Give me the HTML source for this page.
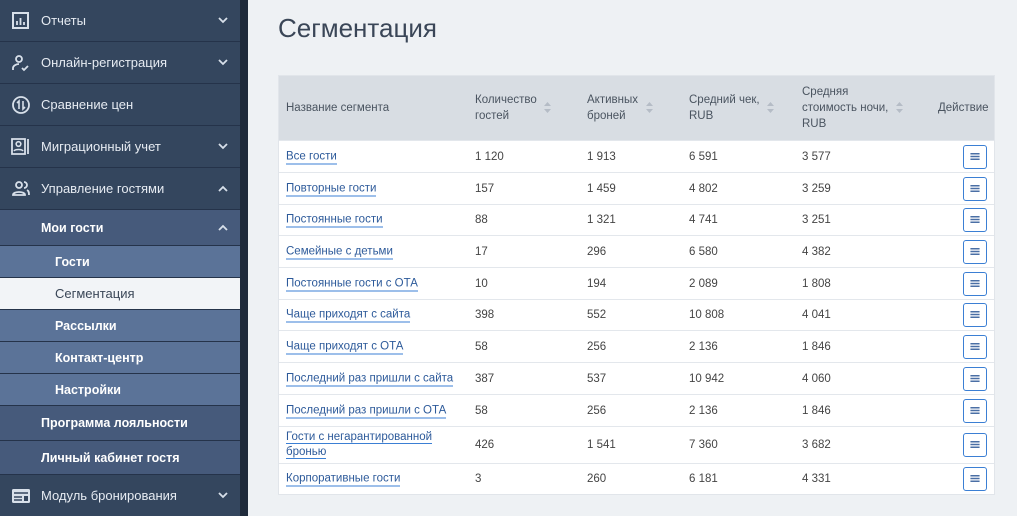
<!DOCTYPE html>
<html><head><meta charset="utf-8"><style>
*{box-sizing:border-box;margin:0;padding:0}
body{width:1017px;height:516px;overflow:hidden;background:#eef1f4;font-family:"Liberation Sans","DejaVu Sans",sans-serif;position:relative}
#sb{position:absolute;left:0;top:0;width:240px;height:516px;background:#34465e}
#strip{position:absolute;left:240px;top:0;width:8px;height:516px;background:#1f2b3b}
.it{position:absolute;left:0;width:240px;color:#e6ebf2;font-size:13px;display:flex;align-items:center;border-bottom:1px solid #25334a}
.bd{font-weight:bold;font-size:12.5px;color:#fff}
.ic{position:absolute;left:11px;width:20px;height:20px}
.chev{position:absolute;right:12px;top:50%;margin-top:-4px}
h1{position:absolute;left:278px;top:13px;font-size:26px;font-weight:normal;color:#3a4657}
#tbl{position:absolute;left:278px;top:75px;width:717px;background:#fff;border:1px solid #e1e5ea}
.hd{height:64px;background:#d8dde3;position:relative;font-size:11.5px;color:#4a5460}
.hd div{position:absolute;line-height:16px}
.srt{position:absolute;width:7px;height:11px}
.r{position:relative;border-top:1px solid #e3e7ec;font-size:11.5px;color:#444}
.r span{position:absolute;top:50%;transform:translateY(-50%)}
.r a{position:absolute;left:7px;top:50%;transform:translateY(-50%);color:#2d5a9a;text-decoration:none;border-bottom:1px solid #3b7fd4;line-height:14px}
.b{position:absolute;left:684px;top:50%;margin-top:-12px;width:24px;height:24px;border:1px solid #3b7fd4;border-radius:3px;background:#fff}
</style></head><body>
<div id="sb">
<div class="it" style="top:0;height:42px"><svg class="ic" viewBox="0 0 20 20" style="top:11px"><rect x="2" y="2" width="15" height="15" fill="none" stroke="#d8e0ea" stroke-width="2"/><path d="M6 14V10M9.5 14V7M13 14V11" stroke="#d8e0ea" stroke-width="1.8"/></svg><span style="margin-left:41px">Отчеты</span><svg class="chev" width="10" height="7"><path d="M1 1l4 4 4-4" fill="none" stroke="#d8e0ea" stroke-width="1.8"/></svg></div>
<div class="it" style="top:42px;height:42px"><svg class="ic" viewBox="0 0 20 20" style="top:11px"><circle cx="8" cy="6" r="3" fill="none" stroke="#d8e0ea" stroke-width="1.8"/><path d="M2 17v-2c0-2 3-4 6-4M11 15l2 2 4-4" fill="none" stroke="#d8e0ea" stroke-width="1.8"/></svg><span style="margin-left:41px">Онлайн-регистрация</span><svg class="chev" width="10" height="7"><path d="M1 1l4 4 4-4" fill="none" stroke="#d8e0ea" stroke-width="1.8"/></svg></div>
<div class="it" style="top:84px;height:42px"><svg class="ic" viewBox="0 0 20 20" style="top:11px"><circle cx="10" cy="10" r="8" fill="none" stroke="#d8e0ea" stroke-width="1.8"/><path d="M8 14V6L6 8M12 6v8l2-2" fill="none" stroke="#d8e0ea" stroke-width="1.6"/></svg><span style="margin-left:41px">Сравнение цен</span></div>
<div class="it" style="top:126px;height:42px"><svg class="ic" viewBox="0 0 20 20" style="top:11px"><path d="M1 2h13v15H1zM17 2v15" fill="none" stroke="#d8e0ea" stroke-width="1.8"/><circle cx="7.5" cy="7" r="2.3" fill="none" stroke="#d8e0ea" stroke-width="1.6"/><path d="M3 14c1-2 8-2 9 0" fill="none" stroke="#d8e0ea" stroke-width="1.6"/></svg><span style="margin-left:41px">Миграционный учет</span><svg class="chev" width="10" height="7"><path d="M1 1l4 4 4-4" fill="none" stroke="#d8e0ea" stroke-width="1.8"/></svg></div>
<div class="it" style="top:168px;height:42px"><svg class="ic" viewBox="0 0 20 20" style="top:11px"><circle cx="8" cy="6" r="3" fill="none" stroke="#d8e0ea" stroke-width="1.8"/><path d="M2 16c0-4 12-4 12 0zM13 3a3 3 0 010 6M16 11c2 1 2 3 2 5" fill="none" stroke="#d8e0ea" stroke-width="1.8"/></svg><span style="margin-left:41px">Управление гостями</span><svg class="chev" width="10" height="7"><path d="M1 6l4-4 4 4" fill="none" stroke="#d8e0ea" stroke-width="1.8"/></svg></div>
<div class="it bd" style="top:210px;height:36px;background:#465a7b"><span style="margin-left:41px">Мои гости</span><svg class="chev" width="10" height="7"><path d="M1 6l4-4 4 4" fill="none" stroke="#d8e0ea" stroke-width="1.8"/></svg></div>
<div class="it bd" style="top:246px;height:32px;background:#5b7398"><span style="margin-left:55px">Гости</span></div>
<div class="it" style="top:278px;height:32px;background:#f2f4f7;color:#3a4657"><span style="margin-left:55px">Сегментация</span></div>
<div class="it bd" style="top:310px;height:32px;background:#5b7398"><span style="margin-left:55px">Рассылки</span></div>
<div class="it bd" style="top:342px;height:32px;background:#5b7398"><span style="margin-left:55px">Контакт-центр</span></div>
<div class="it bd" style="top:374px;height:32px;background:#5b7398"><span style="margin-left:55px">Настройки</span></div>
<div class="it bd" style="top:406px;height:35px;background:#465a7b"><span style="margin-left:41px">Программа лояльности</span></div>
<div class="it bd" style="top:441px;height:34px;background:#465a7b"><span style="margin-left:41px">Личный кабинет гостя</span></div>
<div class="it" style="top:475px;height:41px;border:none"><svg class="ic" viewBox="0 0 20 20" style="top:11px"><rect x="1" y="3" width="18" height="14" rx="1.5" fill="#d8e0ea"/><path d="M3 7h14M3 11h8M3 14h8" stroke="#34465e" stroke-width="1.6"/><rect x="13" y="10" width="4" height="5" fill="#34465e"/></svg><span style="margin-left:41px">Модуль бронирования</span><svg class="chev" width="10" height="7"><path d="M1 1l4 4 4-4" fill="none" stroke="#d8e0ea" stroke-width="1.8"/></svg></div>
</div>
<div id="strip"></div>
<h1>Сегментация</h1>
<svg width="0" height="0" style="position:absolute"><defs><symbol id="m" viewBox="0 0 24 24"><path d="M7 8.5h10M7 11.5h10M7 14.5h10" stroke="#4a6fa5" stroke-width="1.6"/></symbol></defs></svg>
<div id="tbl">
<div class="hd">
<div style="left:7px;top:24px">Название сегмента</div>
<div style="left:196px;top:16px">Количество<br>гостей</div>
<div style="left:308px;top:16px">Активных<br>броней</div>
<div style="left:410px;top:16px">Средний чек,<br>RUB</div>
<div style="left:523px;top:8px">Средняя<br>стоимость ночи,<br>RUB</div>
<div style="left:659px;top:24px">Действие</div>
<svg class="srt" style="left:265px;top:26px" viewBox="0 0 7 11"><path d="M0 4l3.5-4L7 4zM0 7l3.5 4L7 7z" fill="#b5bcc6"/></svg>
<svg class="srt" style="left:367px;top:26px" viewBox="0 0 7 11"><path d="M0 4l3.5-4L7 4zM0 7l3.5 4L7 7z" fill="#b5bcc6"/></svg>
<svg class="srt" style="left:488px;top:26px" viewBox="0 0 7 11"><path d="M0 4l3.5-4L7 4zM0 7l3.5 4L7 7z" fill="#b5bcc6"/></svg>
<svg class="srt" style="left:617px;top:26px" viewBox="0 0 7 11"><path d="M0 4l3.5-4L7 4zM0 7l3.5 4L7 7z" fill="#b5bcc6"/></svg>
</div>
<div class="r" style="height:32px"><a>Все гости</a><span style="left:196px">1 120</span><span style="left:308px">1 913</span><span style="left:410px">6 591</span><span style="left:523px">3 577</span><svg class="b"><use href="#m"/></svg></div>
<div class="r" style="height:32px"><a>Повторные гости</a><span style="left:196px">157</span><span style="left:308px">1 459</span><span style="left:410px">4 802</span><span style="left:523px">3 259</span><svg class="b"><use href="#m"/></svg></div>
<div class="r" style="height:31px"><a>Постоянные гости</a><span style="left:196px">88</span><span style="left:308px">1 321</span><span style="left:410px">4 741</span><span style="left:523px">3 251</span><svg class="b"><use href="#m"/></svg></div>
<div class="r" style="height:32px"><a>Семейные с детьми</a><span style="left:196px">17</span><span style="left:308px">296</span><span style="left:410px">6 580</span><span style="left:523px">4 382</span><svg class="b"><use href="#m"/></svg></div>
<div class="r" style="height:32px"><a>Постоянные гости с ОТА</a><span style="left:196px">10</span><span style="left:308px">194</span><span style="left:410px">2 089</span><span style="left:523px">1 808</span><svg class="b"><use href="#m"/></svg></div>
<div class="r" style="height:31px"><a>Чаще приходят с сайта</a><span style="left:196px">398</span><span style="left:308px">552</span><span style="left:410px">10 808</span><span style="left:523px">4 041</span><svg class="b"><use href="#m"/></svg></div>
<div class="r" style="height:32px"><a>Чаще приходят с ОТА</a><span style="left:196px">58</span><span style="left:308px">256</span><span style="left:410px">2 136</span><span style="left:523px">1 846</span><svg class="b"><use href="#m"/></svg></div>
<div class="r" style="height:32px"><a>Последний раз пришли с сайта</a><span style="left:196px">387</span><span style="left:308px">537</span><span style="left:410px">10 942</span><span style="left:523px">4 060</span><svg class="b"><use href="#m"/></svg></div>
<div class="r" style="height:32px"><a>Последний раз пришли с ОТА</a><span style="left:196px">58</span><span style="left:308px">256</span><span style="left:410px">2 136</span><span style="left:523px">1 846</span><svg class="b"><use href="#m"/></svg></div>
<div class="r" style="height:37px"><a style="line-height:15px;width:160px;border:none"><span style="position:static;transform:none;border-bottom:1px solid #3b7fd4">Гости с негарантированной</span><br><span style="position:static;transform:none;border-bottom:1px solid #3b7fd4">бронью</span></a><span style="left:196px">426</span><span style="left:308px">1 541</span><span style="left:410px">7 360</span><span style="left:523px">3 682</span><svg class="b"><use href="#m"/></svg></div>
<div class="r" style="height:31px"><a>Корпоративные гости</a><span style="left:196px">3</span><span style="left:308px">260</span><span style="left:410px">6 181</span><span style="left:523px">4 331</span><svg class="b"><use href="#m"/></svg></div>
</div>
</body></html>
